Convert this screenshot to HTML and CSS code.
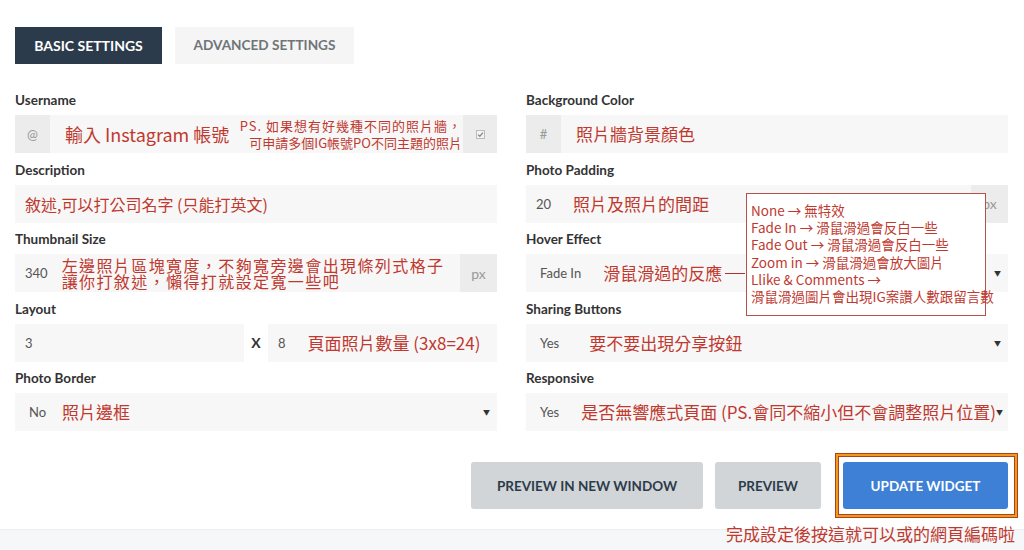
FILE: index.html
```html
<!DOCTYPE html>
<html lang="zh-Hant">
<head>
    <meta charset="UTF-8">
    <meta name="viewport" content="width=device-width, initial-scale=1.0">
    <title>Widget Settings</title>
    <link rel="stylesheet" href="styles.css">
</head>
<body>
<div class="page">
    <nav class="tabs">
        <a class="tab active">BASIC SETTINGS</a>
        <a class="tab">ADVANCED SETTINGS</a>
    </nav>

    <div class="form">
        <div class="col">
            <div class="field">
                <label>Username</label>
                <div class="input">
                    <span class="addon">@</span>
                    <span class="value"><span class="note big">輸入 Instagram 帳號</span></span>
                    <span class="ps">
                        <span class="ps-first">PS. 如果想有好幾種不同的照片牆，</span>
                        <span class="ps-second">可申請多個IG帳號PO不同主題的照片</span>
                    </span>
                    <span class="addon check"><svg width="9" height="9" viewBox="0 0 9 9"><rect x="0.5" y="0.5" width="8" height="8" fill="#f4f4f4" stroke="#bbb"/><path d="M2 4.6 L3.8 6.3 L7 2.6" fill="none" stroke="#888" stroke-width="1.3"/></svg></span>
                </div>
            </div>
            <div class="field">
                <label>Description</label>
                <div class="input">
                    <span class="value"><span class="note desc">敘述,可以打公司名字 (只能打英文)</span></span>
                </div>
            </div>
            <div class="field">
                <label>Thumbnail Size</label>
                <div class="input">
                    <span class="value">340<span class="note two">左邊照片區塊寬度，不夠寬旁邊會出現條列式格子<br>讓你打敘述，懶得打就設定寬一些吧</span></span>
                    <span class="addon unit">px</span>
                </div>
            </div>
            <div class="field">
                <label>Layout</label>
                <div class="layout">
                    <div class="input"><span class="value">3</span></div>
                    <span class="times">X</span>
                    <div class="input"><span class="value">8<span class="note gap-22">頁面照片數量 (3x8=24)</span></span></div>
                </div>
            </div>
            <div class="field">
                <label>Photo Border</label>
                <div class="input select">
                    <span class="value">No<span class="note">照片邊框</span></span>
                    <span class="arrow">&#9660;</span>
                </div>
            </div>
        </div>

        <div class="col">
            <div class="field">
                <label>Background Color</label>
                <div class="input">
                    <span class="addon">#</span>
                    <span class="value"><span class="note">照片牆背景顏色</span></span>
                </div>
            </div>
            <div class="field">
                <label>Photo Padding</label>
                <div class="input">
                    <span class="value">20<span class="note gap-22">照片及照片的間距</span></span>
                    <span class="addon unit">px</span>
                </div>
            </div>
            <div class="field">
                <label>Hover Effect</label>
                <div class="input select">
                    <span class="value">Fade In<span class="note gap-22">滑鼠滑過的反應</span><span class="dash"></span></span>
                    <span class="arrow">&#9660;</span>
                </div>
            </div>
            <div class="field">
                <label>Sharing Buttons</label>
                <div class="input select">
                    <span class="value">Yes<span class="note gap-30">要不要出現分享按鈕</span></span>
                    <span class="arrow">&#9660;</span>
                </div>
            </div>
            <div class="field">
                <label>Responsive</label>
                <div class="input select">
                    <span class="value">Yes<span class="note gap-24">是否無響應式頁面 (PS.會同不縮小但不會調整照片位置)</span></span>
                    <span class="arrow">&#9660;</span>
                </div>
            </div>
        </div>
    </div>

    <div class="hover-tip">
        None → 無特效<br>
        Fade In → 滑鼠滑過會反白一些<br>
        Fade Out → 滑鼠滑過會反白一些<br>
        Zoom in → 滑鼠滑過會放大圖片<br>
        Llike &amp; Comments →<br>
        滑鼠滑過圖片會出現IG案讚人數跟留言數
    </div>

    <div class="actions">
        <button class="btn gray new-window">PREVIEW IN NEW WINDOW</button>
        <button class="btn gray preview">PREVIEW</button>
        <span class="highlight">
            <button class="btn blue">UPDATE WIDGET</button>
        </span>
    </div>

    <footer class="band">
        <span class="note">完成設定後按這就可以或的網頁編碼啦</span>
    </footer>
</div>
</body>
</html>
```

FILE: styles.css
```css
body {
    margin: 0;
    background: #fff;
    font-family: Lato, "Noto Sans CJK TC", sans-serif;
    color: #333;
}
.page {
    position: relative;
    width: 1024px;
    height: 550px;
    overflow: hidden;
}
.tabs {
    display: flex;
    gap: 13px;
    padding: 27px 0 0 15px;
}
.tab {
    display: block;
    height: 37px;
    line-height: 37px;
    width: 147px;
    text-align: center;
    font-size: 14px;
    font-weight: 700;
    background: #f5f5f5;
    color: #6f7478;
}
.tab + .tab {
    width: 179px;
    font-size: 13.6px;
}
.tab.active {
    background: #2c3b4b;
    color: #fff;
}
.form {
    display: grid;
    grid-template-columns: 482px 482px;
    column-gap: 29px;
    padding: 27px 0 0 15px;
}
.field {
    margin-bottom: 7.5px;
}
.field label {
    display: block;
    height: 18px;
    line-height: 18px;
    margin-bottom: 6px;
    font-size: 13.5px;
    font-weight: 700;
    color: #333;
}
.input {
    display: flex;
    align-items: center;
    height: 38px;
    background: #f7f7f7;
    font-size: 13px;
    color: #555;
}
.value {
    flex: 1;
    display: flex;
    align-items: center;
    padding-left: 10px;
    white-space: nowrap;
}
.select .value {
    padding-left: 14px;
}
.addon {
    display: flex;
    align-items: center;
    justify-content: center;
    width: 35px;
    height: 100%;
    background: #ececec;
    color: #999;
    font-size: 13px;
}
.addon.unit {
    width: 37px;
    font-size: 14px;
}
.addon + .value {
    padding-left: 15px;
}
.arrow {
    width: 14px;
    font-size: 7px;
    color: #333;
}
.note {
    font-family: "Noto Sans CJK TC", sans-serif;
    color: #c0392f;
    font-size: 17px;
    margin-left: 16px;
    line-height: 20px;
}
.addon + .value .note {
    margin-left: 0;
}
.note.big {
    font-size: 18px;
}
.note.desc {
    margin-left: 0;
    font-size: 16px;
}
.note.two {
    margin-left: 14px;
    font-size: 16px;
    line-height: 16px;
    letter-spacing: 1.4px;
}
.note.gap-22 {
    margin-left: 22px;
}
.note.gap-24 {
    margin-left: 22px;
}
.note.gap-30 {
    margin-left: 30px;
}
.dash {
    display: inline-block;
    width: 20px;
    margin-left: 3px;
    border-top: 1px solid #a33;
}
.ps {
    display: flex;
    flex-direction: column;
    align-items: flex-end;
    font-family: "Noto Sans CJK TC", sans-serif;
    color: #c0392f;
    font-size: 13px;
    line-height: 17px;
    padding-right: 1px;
    white-space: nowrap;
}
.ps-first {
    letter-spacing: 1px;
}
.check {
    width: 34px;
}
.layout {
    display: grid;
    grid-template-columns: 229px 24px 229px;
    align-items: center;
}
.times {
    text-align: center;
    font-size: 14px;
    font-weight: 700;
    color: #333;
}
.hover-tip {
    position: absolute;
    left: 746px;
    top: 193px;
    width: 234px;
    height: 108px;
    padding: 8px 0 5px 4px;
    background: #fff;
    border: 1px solid #b5504a;
    font-family: "Noto Sans CJK TC", sans-serif;
    font-size: 13.5px;
    line-height: 17.2px;
    color: #c0392f;
    white-space: nowrap;
}
.actions {
    display: flex;
    justify-content: flex-end;
    align-items: center;
    gap: 12px;
    padding: 14.5px 6px 0 0;
}
.btn {
    height: 47px;
    padding: 0;
    border: none;
    border-radius: 3px;
    font-family: Lato, sans-serif;
    font-size: 13.5px;
    font-weight: 700;
    color: #2c3b4b;
    white-space: nowrap;
}
.btn.gray {
    background: #d1d5d7;
}
.btn.new-window {
    width: 232px;
}
.btn.preview {
    width: 106px;
}
.highlight {
    display: flex;
    margin-left: 2px;
    padding: 8px 9px 8px 7px;
    border: 1px solid #a8431c;
    box-shadow: inset 0 0 0 2px #f39a1e, inset 0 0 0 3px #a8431c;
}
.btn.blue {
    width: 165px;
    background: #3d80d5;
    color: #fff;
}
.band {
    margin-top: 11px;
    height: 21px;
    background: #f6f7f8;
    border-top: 1px solid #eeeff0;
    text-align: right;
    padding-right: 9px;
}
.band .note {
    display: inline-block;
    line-height: 18px;
    position: relative;
    top: -5px;
}
```
